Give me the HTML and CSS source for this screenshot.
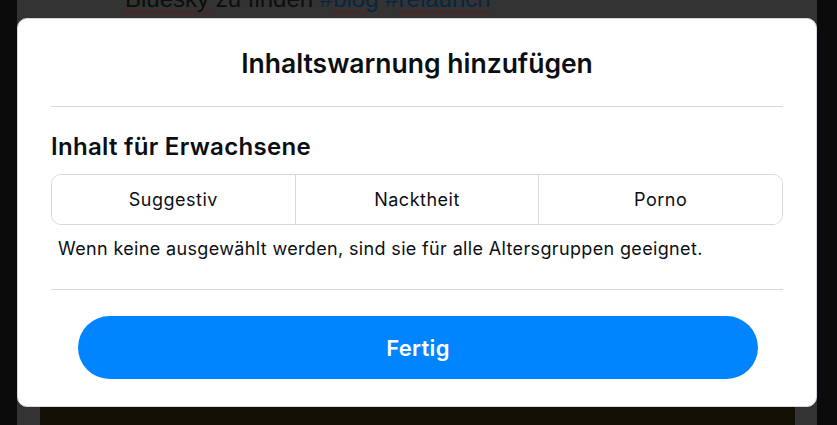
FILE: index.html
```html
<!DOCTYPE html>
<html lang="de">
<head>
  <meta charset="UTF-8" />
  <meta name="viewport" content="width=device-width, initial-scale=1.0"/>
  <title>Inhaltswarnung</title>
  <link rel="stylesheet" href="styles.css">
</head>
<body>

  <!-- Page behind the dialog -->
  <div class="page">
    <p class="post-text">
      <span class="typo">Bluesky</span> zu finden
      <span class="tag">#<span class="typo">blog</span></span>
      <span class="tag">#<span class="typo">relaunch</span></span>
    </p>
    <div class="media">
      <div class="media-shape"></div>
    </div>
  </div>

  <!-- Dialog -->
  <div class="overlay">
    <div class="dialog">
      <div class="dialog-header">
        <h1>Inhaltswarnung hinzufügen</h1>
      </div>

      <div class="dialog-section">
        <h2>Inhalt für Erwachsene</h2>
        <div class="segments">
          <button class="segment">Suggestiv</button>
          <button class="segment">Nacktheit</button>
          <button class="segment">Porno</button>
        </div>
        <p class="hint">Wenn keine ausgewählt werden, sind sie für alle Altersgruppen geeignet.</p>
      </div>

      <div class="dialog-footer">
        <button class="done">Fertig</button>
      </div>
    </div>
  </div>

</body>
</html>
```

FILE: styles.css
```css
body {
  margin: 0;
  padding: 0;
  background: #0b0b0b;
  height: 425px;
  overflow: hidden;
  font-family: 'Inter', 'Noto Sans', sans-serif;
  color: #0b0f14;
}

/* background page, dimmed */
.page {
  width: 800px;
  height: 425px;
  margin-left: 17px;
  background: #333333;
  display: flex;
  flex-direction: column;
  justify-content: space-between;
}

.post-text {
  margin: -13px 0 0 108px;
  font-family: 'Liberation Sans', Arial, sans-serif;
  font-size: 24px;
  line-height: 24px;
  color: #0d0d0d;
}

.typo {
  text-decoration: underline wavy #7a0c0c;
  text-decoration-thickness: 1px;
  text-underline-offset: 3px;
}

.tag {
  color: #0a2540;
}

.media {
  margin: 0 22px 0 23px;
  height: 60px;
  background: #131005;
  position: relative;
}

.media-shape {
  position: absolute;
  left: 270px;
  top: 2px;
  width: 40px;
  height: 40px;
  border-radius: 50% 50% 0 0;
  background: #020202;
}

/* dialog */
.overlay {
  position: absolute;
  top: 18px;
  left: 17px;
  width: 800px;
  height: 389px;
}

.dialog {
  box-sizing: border-box;
  height: 100%;
  background: #ffffff;
  border: 1px solid #d4d9e1;
  border-radius: 10px;
  padding: 0 33px;
  display: flex;
  flex-direction: column;
}

.dialog-header {
  height: 87px;
  border-bottom: 1px solid #d4d9e1;
  display: flex;
  align-items: center;
  justify-content: center;
}

h1 {
  margin: 0;
  font-size: 26.5px;
  font-weight: 600;
}

.dialog-section {
  padding: 25px 0 0;
  height: 157px;
  border-bottom: 1px solid #d4d9e1;
}

h2 {
  margin: 0 0 12px;
  font-size: 24px;
  line-height: 30px;
  font-weight: 600;
  letter-spacing: 0.3px;
}

.segments {
  display: flex;
  border: 1px solid #d4d9e1;
  border-radius: 10px;
  overflow: hidden;
}

.segment {
  flex: 1;
  height: 49px;
  border: none;
  background: #ffffff;
  font-family: 'Inter', sans-serif;
  font-size: 18px;
  letter-spacing: 0.5px;
  color: #0b0f14;
  cursor: pointer;
}

.segment + .segment {
  border-left: 1px solid #d4d9e1;
}

.hint {
  margin: 12px 0 0 7px;
  font-size: 18px;
  line-height: 24px;
  letter-spacing: 0.35px;
}

.dialog-footer {
  padding: 26px 25px 0 27px;
}

.done {
  width: 100%;
  height: 63px;
  border: none;
  border-radius: 32px;
  background: #0085ff;
  color: #ffffff;
  font-family: 'Inter', sans-serif;
  font-size: 22px;
  font-weight: 600;
  letter-spacing: 0.3px;
  cursor: pointer;
}
```
